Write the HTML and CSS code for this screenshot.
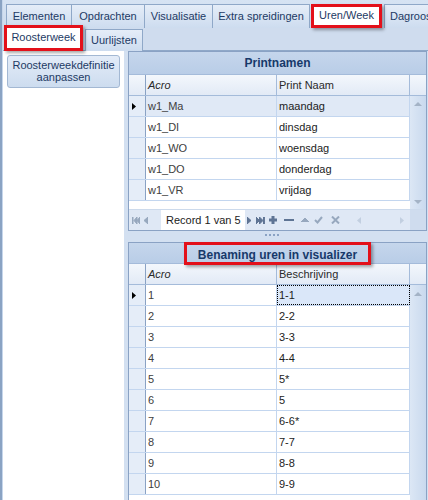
FILE: index.html
```html
<!DOCTYPE html>
<html>
<head>
<meta charset="utf-8">
<link rel="stylesheet" href="styles.css">
</head>
<body>
<div class="app">
  <div class="edge"></div>
  <div class="main">
    <div class="tabrow top">
      <div class="tab t-el">Elementen</div>
      <div class="tab t-op">Opdrachten</div>
      <div class="tab t-vi">Visualisatie</div>
      <div class="tab t-ex">Extra spreidingen</div>
      <div class="tab sel hl t-uw">Uren/Week</div>
      <div class="tab t-dg">Dagroosters</div>
    </div>
    <div class="tabrow sub">
      <div class="tab sel hl t-rw">Roosterweek</div>
      <div class="tab t-ul">Uurlijsten</div>
    </div>
    <div class="content">
      <div class="left">
        <div class="btn">Roosterweekdefinitie<br>aanpassen</div>
      </div>
      <div class="grids">
        <div class="grid g1">
          <div class="gtitle">Printnamen</div>
          <div class="ghead"><div class="ind"></div><div class="c1 it">Acro</div><div class="c2">Print Naam</div><div class="sc"></div></div>
          <div class="gbody">
            <div class="rows">
              <div class="row cur"><div class="ind"><svg class="arrow" width="4" height="7" viewBox="0 0 4 7"><path d="M0 0v7l4-3.5z"/></svg></div><div class="c1 acro">w1_Ma</div><div class="c2">maandag</div></div>
              <div class="row"><div class="ind"></div><div class="c1 acro">w1_DI</div><div class="c2">dinsdag</div></div>
              <div class="row"><div class="ind"></div><div class="c1 acro">w1_WO</div><div class="c2">woensdag</div></div>
              <div class="row"><div class="ind"></div><div class="c1 acro">w1_DO</div><div class="c2">donderdag</div></div>
              <div class="row"><div class="ind"></div><div class="c1 acro">w1_VR</div><div class="c2">vrijdag</div></div>
            </div>
            <div class="vscroll">
              <svg width="8" height="4" viewBox="0 0 8 4"><path d="M0 4l4-4 4 4z"/></svg>
              <svg width="8" height="4" viewBox="0 0 8 4"><path d="M0 0h8l-4 4z"/></svg>
            </div>
          </div>
          <div class="nav">
            <svg class="ni dis n-first" width="8" height="7" viewBox="0 0 8 7"><path d="M0 0h1v7H0zM5 0v7L2 3.5zM8 0v7L5 3.5z"/></svg>
            <svg class="ni dis n-prev" width="4" height="7" viewBox="0 0 4 7"><path d="M4 0v7L0 3.5z"/></svg>
            <div class="rec">Record 1 van 5</div>
            <svg class="ni en n-next" width="4" height="7" viewBox="0 0 4 7"><path d="M0 0v7l4-3.5z"/></svg>
            <svg class="ni en n-last" width="9" height="7" viewBox="0 0 9 7"><path d="M0 0v7l3.5-3.5zM3.5 0v7L7 3.5zM7.5 0h1.2v7H7.5z"/></svg>
            <svg class="ni en n-add" width="8" height="8" viewBox="0 0 8 8"><path d="M3 0h2v3h3v2H5v3H3V5H0V3h3z"/></svg>
            <svg class="ni en n-del" width="10" height="2" viewBox="0 0 10 2"><path d="M0 0h10v2H0z"/></svg>
            <svg class="ni dis n-up" width="8" height="4" viewBox="0 0 8 4"><path d="M0 4l4-4 4 4z"/></svg>
            <svg class="ni dis n-ok" width="9" height="8" viewBox="0 0 9 8"><path d="M1 4l2.5 2.5L8 1" fill="none" stroke-width="2"/></svg>
            <svg class="ni dis n-x" width="9" height="8" viewBox="0 0 9 8"><path d="M1 0.5l7 7M8 0.5l-7 7" fill="none" stroke-width="2"/></svg>
            <div class="hscroll">
              <svg width="4" height="7" viewBox="0 0 4 7"><path d="M4 0v7L0 3.5z"/></svg>
              <svg width="4" height="7" viewBox="0 0 4 7"><path d="M0 0v7l4-3.5z"/></svg>
            </div>
            <div class="corner"></div>
          </div>
        </div>
        <div class="splitter"><span></span><span></span><span></span><span></span></div>
        <div class="grid g2">
          <div class="gtitle"><span class="hlbox">Benaming uren in visualizer</span></div>
          <div class="ghead"><div class="ind"></div><div class="c1 it">Acro</div><div class="c2">Beschrijving</div><div class="sc"></div></div>
          <div class="gbody">
            <div class="rows">
              <div class="row"><div class="ind"><svg class="arrow" width="4" height="7" viewBox="0 0 4 7"><path d="M0 0v7l4-3.5z"/></svg></div><div class="c1 acro">1</div><div class="c2 focus">1-1</div></div>
              <div class="row"><div class="ind"></div><div class="c1 acro">2</div><div class="c2">2-2</div></div>
              <div class="row"><div class="ind"></div><div class="c1 acro">3</div><div class="c2">3-3</div></div>
              <div class="row"><div class="ind"></div><div class="c1 acro">4</div><div class="c2">4-4</div></div>
              <div class="row"><div class="ind"></div><div class="c1 acro">5</div><div class="c2">5*</div></div>
              <div class="row"><div class="ind"></div><div class="c1 acro">6</div><div class="c2">5</div></div>
              <div class="row"><div class="ind"></div><div class="c1 acro">7</div><div class="c2">6-6*</div></div>
              <div class="row"><div class="ind"></div><div class="c1 acro">8</div><div class="c2">7-7</div></div>
              <div class="row"><div class="ind"></div><div class="c1 acro">9</div><div class="c2">8-8</div></div>
              <div class="row"><div class="ind"></div><div class="c1 acro">10</div><div class="c2">9-9</div></div>
            </div>
            <div class="vscroll top-only">
              <svg width="8" height="4" viewBox="0 0 8 4"><path d="M0 4l4-4 4 4z"/></svg>
            </div>
          </div>
        </div>
      </div>
    </div>
  </div>
</div>
</body>
</html>
```
FILE: styles.css
```css
* { box-sizing: border-box; }
html, body { margin: 0; padding: 0; }
body {
  width: 428px;
  height: 500px;
  overflow: hidden;
  background: #d3e0f1;
  font-family: "Liberation Sans", Arial, sans-serif;
  font-size: 11px;
  color: #1c1c1c;
}
.app { display: flex; height: 500px; }
.edge {
  width: 3px;
  flex: none;
  background: linear-gradient(to right, #8aa3c3 0, #8aa3c3 2px, #c6d6eb 2px);
}
.main { flex: 1; display: flex; flex-direction: column; min-width: 0; }

/* tabs */
.tabrow { display: flex; flex: none; }
.tabrow.top {
  height: 28px;
  padding: 4px 0 0 3px;
  background: linear-gradient(#d6e3f3, #cddbee);
}
.tab {
  height: 24px;
  line-height: 22px;
  border: 1px solid #8fa8c8;
  border-bottom: none;
  background: linear-gradient(#e5edf8, #cddcef);
  color: #1d3a64;
  white-space: nowrap;
  text-align: center;
  margin-right: -1px;
  flex: none;
}
.tab.sel { background: #fff; position: relative; z-index: 2; }
.tab.hl { box-shadow: inset 0 0 0 3px #e3101a, 2px 2px 3px rgba(0, 0, 0, 0.35); border: none; }
.t-el { width: 66px; }
.t-op { width: 74px; }
.t-vi { width: 69px; }
.t-ex { width: 98px; }
.t-uw { width: 71px; margin-left: 2px; }
.t-dg { width: 90px; margin-left: 3px; text-align: left; padding-left: 5px; }

.tabrow.sub {
  height: 23px;
  padding-left: 1px;
  border-bottom: 1px solid #8fa8c8;
  background: #cfdcee;
  align-items: flex-start;
}
.t-rw { width: 79px; height: 26px; margin-top: -3px; line-height: 25px; }
.t-ul { width: 58px; height: 22px; margin-top: 1px; margin-left: 3px; line-height: 21px; }

/* content */
.content { display: flex; flex: 1; min-height: 0; }
.left {
  width: 121px;
  flex: none;
  background: #fff;
  padding: 4px 0 0 4px;
}
.btn {
  width: 113px;
  height: 33px;
  border: 1px solid #a3b8d3;
  border-radius: 3px;
  background: linear-gradient(#e3ecf8, #cddcef);
  color: #1d3a64;
  text-align: center;
  line-height: 12px;
  padding-top: 3px;
}
.grids {
  width: 299px;
  margin-left: 4px;
  flex: none;
  display: flex;
  flex-direction: column;
}

/* grid */
.grid {
  border: 1px solid #8aa2c4;
  background: #fff;
  display: flex;
  flex-direction: column;
  flex: none;
}
.g1 { height: 180px; }
.g2 { flex: 1; border-bottom: none; min-height: 0; }
.gtitle {
  flex: none;
  background: linear-gradient(#c5d6ec, #b9cde7);
  color: #17396a;
  font-weight: bold;
  font-size: 12px;
  text-align: center;
  border-bottom: 1px solid #a4bbda;
}
.g1 .gtitle { height: 23px; line-height: 22px; }
.g2 .gtitle { height: 21px; line-height: 20px; }
.hlbox {
  display: inline-block;
  width: 187px;
  height: 23px;
  margin-top: -1px;
  line-height: 21px;
  border: 3px solid #e3101a;
  box-shadow: 2px 2px 3px rgba(0, 0, 0, 0.35);
  position: relative;
  z-index: 2;
}
.ghead {
  flex: none;
  display: flex;
  height: 21px;
  line-height: 20px;
  background: linear-gradient(#f3f7fc, #e2eaf6);
  border-bottom: 1px solid #a4bbda;
  color: #2a2a2a;
}
.ind {
  width: 17px;
  flex: none;
  border-right: 1px solid #8aa2c4;
  background: #e5edf8;
  display: flex;
  align-items: center;
  padding-left: 3px;
}
.ghead .ind { background: transparent; }
.arrow { fill: #000; }
.c1 {
  width: 131px;
  flex: none;
  border-right: 1px solid #c3d6ef;
  padding-left: 2px;
  white-space: nowrap;
}
.c2 {
  flex: 1;
  border-right: 1px solid #c3d6ef;
  padding-left: 2px;
  white-space: nowrap;
}
.ghead .c1, .ghead .c2 { border-right-color: #a4bbda; }
.it { font-style: italic; }
.acro { color: #404040; }
.sc { width: 16px; flex: none; }

.gbody { flex: 1; display: flex; min-height: 0; }
.rows { flex: 1; min-width: 0; }
.row {
  display: flex;
  height: 21px;
  line-height: 20px;
  border-bottom: 1px solid #c3d6ef;
}
.row.cur .c1, .row.cur .c2 { background: #e0e9f6; }
.c2.focus {
  background: #dae7f9;
  outline: 1px dotted #000;
  outline-offset: -1px;
}
.vscroll {
  width: 16px;
  flex: none;
  background: linear-gradient(to right, #dce7f5, #c9d9ee);
  display: flex;
  flex-direction: column;
  justify-content: space-between;
  align-items: center;
  padding: 6px 0 5px;
  fill: #a4b3c6;
}
.vscroll.top-only { justify-content: flex-start; padding-top: 7px; }

/* navigator */
.nav {
  flex: none;
  height: 21px;
  display: flex;
  align-items: center;
  background: #dfe8f5;
  border-top: 1px solid #ccdaec;
}
.ni { flex: none; }
.ni.dis { fill: #97a8be; stroke: #97a8be; }
.ni.en { fill: #5f7494; stroke: #5f7494; }
.n-first { margin-left: 3px; }
.n-prev { margin-left: 4px; }
.rec {
  margin-left: 13px;
  width: 84px;
  height: 20px;
  line-height: 20px;
  background: #fff;
  padding-left: 5px;
  color: #1c1c1c;
}
.n-next { margin-left: 2px; }
.n-last { margin-left: 5px; }
.n-add { margin-left: 4px; }
.n-del { margin-left: 7px; }
.n-up { margin-left: 7px; }
.n-ok { margin-left: 5px; }
.n-x { margin-left: 8px; }
.hscroll {
  margin-left: 13px;
  flex: 1;
  height: 20px;
  display: flex;
  align-items: center;
  justify-content: space-between;
  padding: 0 6px 0 4px;
  fill: #c2cfe0;
}
.corner { width: 16px; height: 20px; flex: none; background: #cfdcee; }

.splitter {
  flex: none;
  height: 11px;
  display: flex;
  justify-content: center;
  gap: 2px;
  padding: 3px 11px 0 0;
}
.splitter span { width: 2px; height: 2px; background: #8aa2c4; }
```
